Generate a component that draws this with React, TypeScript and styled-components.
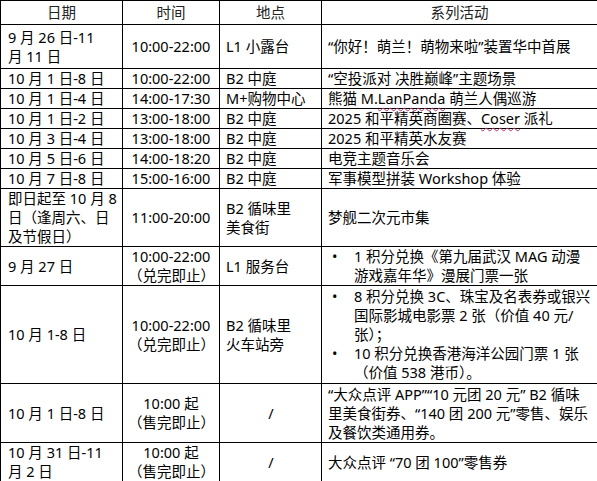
import React from 'react'
import styled, { createGlobalStyle } from 'styled-components'

const GlobalStyle = createGlobalStyle`
  body {
    margin: 0;
    background: #fff;
    font-family: "Noto Sans", "Noto Sans CJK SC", sans-serif;
    color: #000;
  }
`

const Table = styled.table`
  width: 597px;
  table-layout: fixed;
  border-collapse: collapse;
  font-size: 14.5px;
  line-height: 19px;
`

const HeadCell = styled.th`
  border: 1px solid #000;
  font-weight: normal;
  font-size: 14.5px;
  text-align: center;
  padding: 0 7px;
  height: 23px;
  color: #222;
  line-height: 19px;
`

const Row = styled.tr<{ $h: number }>`
  height: ${p => p.$h}px;
`

const Cell = styled.td<{ $align?: 'left' | 'center'; $padLeft?: number }>`
  border: 1px solid #000;
  padding: 0 5px 0 ${p => p.$padLeft ?? 7}px;
  vertical-align: middle;
  text-align: ${p => p.$align || 'left'};
  white-space: nowrap;
  font-size: 14.5px;
`

const Line = styled.div`
  height: 19px;
  line-height: 19px;
`

const BulletList = styled.ul`
  margin: 0;
  padding: 0 0 0 26px;
  list-style: none;
`

const Bullet = styled.li`
  position: relative;
  &::before {
    content: '•';
    position: absolute;
    left: -22px;
    top: 0;
    line-height: 19px;
  }
`

const Squiggle = styled.span`
  text-decoration: underline wavy #c0306b;
  text-decoration-thickness: 1px;
  text-underline-offset: 3px;
`

type Content = React.ReactNode

const Lines = ({ items }: { items: Content[] }) => (
  <>
    {items.map((t, i) => (
      <Line key={i}>{t}</Line>
    ))}
  </>
)

type RowData = {
  h: number
  date: Content[]
  time: Content[]
  place: Content[]
  placeCenter?: boolean
  activity: Content
}

const rows: RowData[] = [
  {
    h: 44,
    date: ['9 月 26 日-11', '月 11 日'],
    time: ['10:00-22:00'],
    place: ['L1 小露台'],
    activity: <Line>“你好！萌兰！萌物来啦”装置华中首展</Line>,
  },
  {
    h: 20,
    date: ['10 月 1 日-8 日'],
    time: ['10:00-22:00'],
    place: ['B2 中庭'],
    activity: <Line>“空投派对  决胜巅峰”主题场景</Line>,
  },
  {
    h: 20,
    date: ['10 月 1 日-4 日'],
    time: ['14:00-17:30'],
    place: ['M+购物中心'],
    activity: (
      <Line>
        熊猫 M.<Squiggle>LanPanda</Squiggle> 萌兰人偶巡游
      </Line>
    ),
  },
  {
    h: 20,
    date: ['10 月 1 日-2 日'],
    time: ['13:00-18:00'],
    place: ['B2 中庭'],
    activity: (
      <Line>
        2025 和平精英商圈赛、<Squiggle>Coser</Squiggle> 派礼
      </Line>
    ),
  },
  { h: 19, date: ['10 月 3 日-4 日'], time: ['13:00-18:00'], place: ['B2 中庭'], activity: <Line>2025 和平精英水友赛</Line> },
  { h: 19, date: ['10 月 5 日-6 日'], time: ['14:00-18:20'], place: ['B2 中庭'], activity: <Line>电竞主题音乐会</Line> },
  {
    h: 20,
    date: ['10 月 7 日-8 日'],
    time: ['15:00-16:00'],
    place: ['B2 中庭'],
    activity: <Line>军事模型拼装 Workshop 体验</Line>,
  },
  {
    h: 58,
    date: ['即日起至 10 月 8', '日（逢周六、日', '及节假日）'],
    time: ['11:00-20:00'],
    place: ['B2 循味里', '美食街'],
    activity: <Line>梦舰二次元市集</Line>,
  },
  {
    h: 39,
    date: ['9 月 27 日'],
    time: ['10:00-22:00', '（兑完即止）'],
    place: ['L1 服务台'],
    activity: (
      <BulletList>
        <Bullet>
          <Lines items={['1 积分兑换《第九届武汉 MAG 动漫', '游戏嘉年华》漫展门票一张']} />
        </Bullet>
      </BulletList>
    ),
  },
  {
    h: 98,
    date: ['10 月 1-8 日'],
    time: ['10:00-22:00', '（兑完即止）'],
    place: ['B2 循味里', '火车站旁'],
    activity: (
      <BulletList>
        <Bullet>
          <Lines items={['8 积分兑换 3C、珠宝及名表券或银兴', '国际影城电影票 2 张（价值 40 元/', '张）；']} />
        </Bullet>
        <Bullet>
          <Lines items={['10 积分兑换香港海洋公园门票 1 张', '（价值 538 港币）。']} />
        </Bullet>
      </BulletList>
    ),
  },
  {
    h: 59,
    date: ['10 月 1 日-8 日'],
    time: ['10:00 起', '（售完即止）'],
    place: ['/'],
    placeCenter: true,
    activity: (
      <Lines
        items={['“大众点评 APP”“10 元团 20 元” B2 循味', '里美食街券、“140 团 200 元”零售、娱乐', '及餐饮类通用券。']}
      />
    ),
  },
  {
    h: 38,
    date: ['10 月 31 日-11', '月 2 日'],
    time: ['10:00 起', '（售完即止）'],
    place: ['/'],
    placeCenter: true,
    activity: <Line>大众点评 “70 团 100”零售券</Line>,
  },
]

export default function App() {
  return (
    <>
      <GlobalStyle />
      <Table>
        <colgroup>
          <col style={{ width: 122 }} />
          <col style={{ width: 97 }} />
          <col style={{ width: 102 }} />
          <col style={{ width: 276 }} />
        </colgroup>
        <thead>
          <tr>
            <HeadCell>日期</HeadCell>
            <HeadCell>时间</HeadCell>
            <HeadCell>地点</HeadCell>
            <HeadCell>系列活动</HeadCell>
          </tr>
        </thead>
        <tbody>
          {rows.map((r, i) => (
            <Row key={i} $h={r.h}>
              <Cell>
                <Lines items={r.date} />
              </Cell>
              <Cell $align="center" $padLeft={5}>
                <Lines items={r.time} />
              </Cell>
              <Cell $align={r.placeCenter ? 'center' : 'left'} $padLeft={6}>
                <Lines items={r.place} />
              </Cell>
              <Cell $padLeft={6}>{r.activity}</Cell>
            </Row>
          ))}
        </tbody>
      </Table>
    </>
  )
}
